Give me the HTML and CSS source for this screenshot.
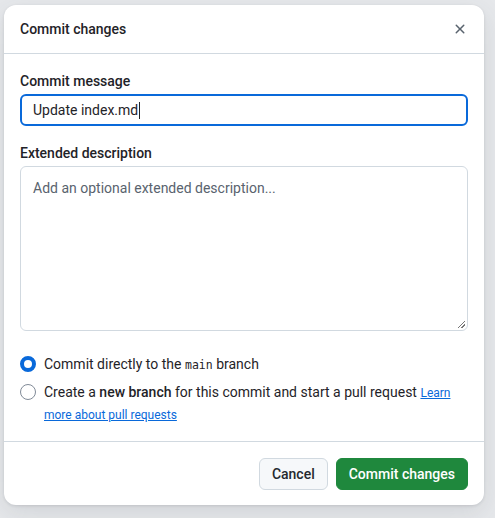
FILE: index.html
```html
<!DOCTYPE html>
<html>
  <head>
    <title>Commit changes</title>
    <link rel="stylesheet" href="styles.css">
  </head>
  <body>
    <div class="dialog">
      <div class="dialog-header">
        <h1 class="dialog-title">Commit changes</h1>
        <button class="close-button" aria-label="Close">
          <svg width="16" height="16" viewBox="0 0 16 16">
            <path d="M3.72 3.72a.75.75 0 0 1 1.06 0L8 6.94l3.22-3.22a.75.75 0 1 1 1.06 1.06L9.06 8l3.22 3.22a.75.75 0 1 1-1.06 1.06L8 9.06l-3.22 3.22a.75.75 0 0 1-1.06-1.06L6.94 8 3.72 4.78a.75.75 0 0 1 0-1.06Z"></path>
          </svg>
        </button>
      </div>

      <div class="dialog-body">
        <label class="field-label">Commit message</label>
        <div class="text-input">Update index.md<span class="caret"></span></div>

        <label class="field-label">Extended description</label>
        <div class="text-area">
          <span class="placeholder">Add an optional extended description...</span>
        </div>

        <div class="choices">
          <div class="choice">
            <span class="radio checked"></span>
            <p>Commit directly to the <code>main</code> branch</p>
          </div>
          <div class="choice">
            <span class="radio"></span>
            <p>Create a <b>new branch</b> for this commit and start a pull request <a href="#">Learn more about pull requests</a></p>
          </div>
        </div>
      </div>

      <div class="dialog-footer">
        <button class="btn">Cancel</button>
        <button class="btn btn-primary">Commit changes</button>
      </div>
    </div>
  </body>
</html>
```

FILE: styles.css
```css
body {
  margin: 0;
  height: 518px;
  background-color: #e6e8eb;
  font-family: Roboto, Arial, sans-serif;
  font-size: 14px;
  color: #1f2328;
  padding: 5px 0 0 4px;
  box-sizing: border-box;
}

.dialog {
  width: 480px;
  height: 500px;
  background-color: white;
  border-radius: 12px;
  box-shadow: 0 1px 3px rgba(31, 35, 40, 0.12), 0 8px 24px rgba(66, 74, 83, 0.12);
  display: flex;
  flex-direction: column;
  overflow: hidden;
}

.dialog-header {
  display: flex;
  align-items: center;
  justify-content: space-between;
  padding: 8px;
  height: 49px;
  box-sizing: border-box;
  border-bottom: 1px solid #d1d9e0;
}

.dialog-title {
  margin: 0;
  padding: 6px 8px;
  font-size: 14px;
  font-weight: 500;
}

.close-button {
  width: 32px;
  height: 32px;
  border: none;
  background: transparent;
  display: flex;
  align-items: center;
  justify-content: center;
  fill: #59636e;
  padding: 0;
}

.dialog-body {
  padding: 17px 16px 14px;
  flex: 1;
  display: flex;
  flex-direction: column;
}

.field-label {
  display: block;
  font-weight: 500;
  line-height: 20px;
  margin-bottom: 3px;
}

.text-input {
  height: 32px;
  box-sizing: border-box;
  border: 2px solid #0969da;
  border-radius: 6px;
  padding: 0 11px;
  display: flex;
  align-items: center;
  margin-bottom: 17px;
}

.caret {
  display: inline-block;
  width: 1px;
  height: 17px;
  margin-left: 1px;
  background-color: #1f2328;
}

.text-area {
  height: 165px;
  box-sizing: border-box;
  border: 1px solid #d1d9e0;
  border-radius: 6px;
  padding: 11px 12px;
  position: relative;
}

.text-area::after {
  content: "";
  position: absolute;
  right: 2px;
  bottom: 2px;
  width: 7px;
  height: 7px;
  background: linear-gradient(135deg, transparent 45%, #777 45%, #777 55%, transparent 55%, transparent 70%, #777 70%, #777 80%, transparent 80%);
}

.placeholder {
  color: #59636e;
  line-height: 20px;
}

.choices {
  margin-top: 22px;
  display: flex;
  flex-direction: column;
  gap: 6px;
}

.choice {
  display: flex;
  gap: 8px;
  align-items: flex-start;
}

.choice p {
  margin: 0;
  line-height: 22px;
}

.radio {
  flex: none;
  width: 16px;
  height: 16px;
  margin-top: 3px;
  border-radius: 50%;
  border: 1px solid #818b98;
  box-sizing: border-box;
}

.radio.checked {
  border: 4px solid #0969da;
}

code {
  font-family: "DejaVu Sans Mono", monospace;
  font-size: 11.5px;
  line-height: 14px;
}

b {
  font-weight: 500;
}

a {
  color: #0969da;
  font-size: 12px;
  line-height: 14px;
}

.dialog-footer {
  border-top: 1px solid #d1d9e0;
  padding: 16px 16px 15px;
  display: flex;
  justify-content: flex-end;
  gap: 8px;
}

.btn {
  height: 32px;
  padding: 0 12px;
  border-radius: 6px;
  border: 1px solid #d1d9e0;
  background-color: #f6f8fa;
  color: #25292e;
  font-family: inherit;
  font-size: 14px;
  font-weight: 500;
}

.btn-primary {
  background-color: #1f883d;
  border-color: #1f883d;
  color: white;
}
```
